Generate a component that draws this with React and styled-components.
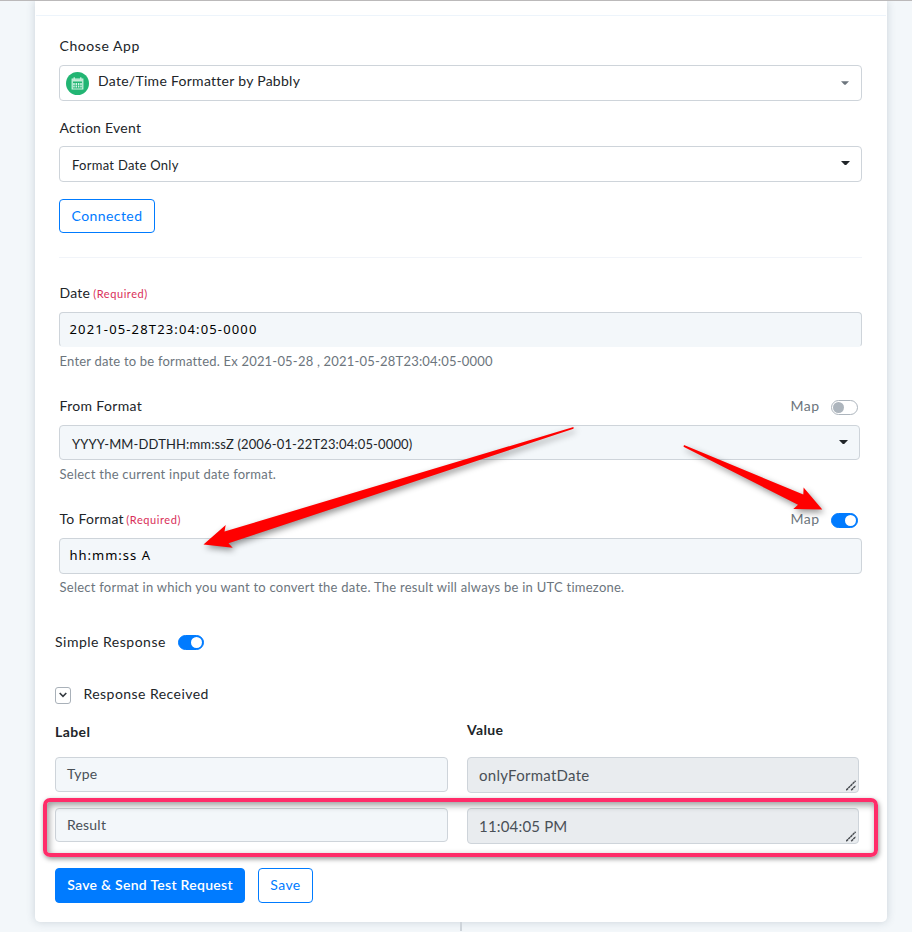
import React from "react";
import styled, { createGlobalStyle } from "styled-components";

const GlobalStyle = createGlobalStyle`
  *, *::before, *::after { box-sizing: border-box; }
  body {
    margin: 0;
    background: #f3f7fa;
    color: #212529;
    font: 14px/20px Lato, sans-serif;
  }
`;

const Page = styled.div`
  position: relative;
  width: 912px;
  height: 932px;
  overflow: hidden;
  border-top: 1px solid #bbb9ba;
`;

const Card = styled.main`
  width: 852px;
  height: 921px;
  margin-left: 35px;
  background: #fff;
  border-radius: 0 0 5px 5px;
  box-shadow: 0 0 9px rgba(60, 80, 100, 0.22);
`;

const CardHeader = styled.div`
  height: 15px;
  margin: 0 1px;
  border-bottom: 1px solid #edf4fb;
`;

const Form = styled.section`
  padding: 0 25px 0 24px;
`;

const Spaced = styled.span`
  letter-spacing: ${(p) => p.$ls}px;
  white-space: pre;
`;

const LiftedText = styled.span`
  padding-bottom: 4px;
`;

const LabelRow = styled.div`
  display: flex;
  align-items: center;
  height: 20px;
  margin-top: ${(p) => p.$top}px;
  padding: 0 4px 0 0.5px;
`;

const Required = styled.small`
  margin-left: ${(p) => p.$gap || 3}px;
  padding-top: 2px;
  font-size: 11px;
  letter-spacing: 0.57px;
  color: #d92f59;
`;

const MapControl = styled.div`
  display: flex;
  align-items: center;
  gap: 11.5px;
  margin-left: auto;
  color: #6c757d;
`;

const Toggle = styled.span`
  display: flex;
  align-items: center;
  justify-content: ${(p) => (p.$on ? "flex-end" : "flex-start")};
  width: ${(p) => p.$w || 27}px;
  height: 15px;
  margin-top: ${(p) => p.$top || 2}px;
  padding: 0 1px;
  border: 1px solid ${(p) => (p.$on ? "#007bff" : "#adb5bd")};
  border-radius: 8px;
  background: ${(p) => (p.$on ? "#007bff" : "#fff")};

  &::before {
    content: "";
    width: 11px;
    height: 11px;
    border-radius: 50%;
    background: ${(p) => (p.$on ? "#fff" : "#adb5bd")};
  }
`;

const SelectBox = styled.div`
  display: flex;
  align-items: center;
  width: ${(p) => p.$w || 803}px;
  height: ${(p) => p.$h || 36}px;
  margin-top: ${(p) => p.$top}px;
  padding: ${(p) => p.$pad};
  border: 1px solid #ced4da;
  border-radius: 4px;
  background: ${(p) => (p.$filled ? "#f3f7fa" : "#fff")};
  font-size: ${(p) => p.$size || 13}px;
`;

const Caret = styled.svg`
  width: ${(p) => p.$w || 9}px;
  height: 4px;
  margin: 0 0 ${(p) => p.$lift || 5}px auto;
  fill: ${(p) => p.$color || "#212529"};
`;

const AppIcon = styled.svg`
  flex: none;
  margin-right: 9px;
`;

const TextField = styled.div`
  display: flex;
  align-items: center;
  width: 803px;
  height: ${(p) => p.$h}px;
  margin-top: 9px;
  padding: 0 10px 2px 9.5px;
  border: 1px solid #ced4da;
  border-bottom-color: ${(p) => (p.$open ? "#f3f7fa" : "#ced4da")};
  border-radius: 4px;
  background: #f3f7fa;
  color: #000;
  font: 13px "Noto Sans", sans-serif;
`;

const Help = styled.p`
  height: 18px;
  margin: ${(p) => p.$top || 5}px 0 0 0.5px;
  font-size: 13px;
  line-height: 18px;
  color: #6c757d;
`;

const Button = styled.button`
  display: inline-flex;
  align-items: center;
  justify-content: center;
  width: ${(p) => p.$w}px;
  height: ${(p) => p.$h}px;
  padding: 0 0 ${(p) => p.$lift || 0}px;
  border: 1px solid #007bff;
  border-radius: 4px;
  background: ${(p) => (p.$primary ? "#007bff" : "#fff")};
  color: ${(p) => (p.$primary ? "#fff" : "#007bff")};
  font: ${(p) => (p.$primary ? 600 : 400)} 14px/20px Lato, sans-serif;
`;

const ConnectionRow = styled.div`
  display: flex;
  margin-top: 17px;
`;

const Rule = styled.hr`
  width: 803px;
  height: 1px;
  margin: 24px 0 0;
  border: 0;
  background: #f1f4f9;
`;

const Response = styled.section`
  padding: 0 28px 0 20px;
`;

const ResponseRow = styled.div`
  display: flex;
  align-items: center;
  height: 20px;
  gap: ${(p) => p.$gap}px;
  margin-top: ${(p) => p.$top}px;
`;

const Expander = styled.span`
  display: grid;
  place-items: center;
  width: 16px;
  height: 17px;
  margin-top: 2px;
  border: 1px solid #a9b1b9;
  border-radius: 3px;
`;

const Columns = styled.div`
  display: grid;
  grid-template-columns: 393px 392px;
  column-gap: 19px;
  margin-top: ${(p) => p.$top}px;
`;

const ColumnTitle = styled.strong`
  height: 20px;
  margin-top: ${(p) => p.$top || 0}px;
  font-weight: 700;
`;

const NameField = styled.div`
  display: flex;
  align-items: center;
  height: ${(p) => p.$h}px;
  padding: 0 11px 1px;
  border: 1px solid #ced4da;
  border-radius: 4px;
  background: #f3f7fa;
  color: #495057;
`;

const ValueField = styled.div`
  display: flex;
  align-items: center;
  justify-content: space-between;
  height: 36px;
  padding: 0 2px 0 11px;
  border: 1px solid #ced4da;
  border-radius: 4px;
  background: #e9ecef;
  color: #495057;
  font-size: 15px;
`;

const ValueText = styled.span`
  padding-bottom: 1px;
`;

const Grip = styled.svg`
  align-self: flex-end;
  margin-bottom: 1px;
`;

const Highlight = styled.div`
  position: absolute;
  left: 42.5px;
  top: 797px;
  width: 835px;
  height: 59px;
  border: 4px solid #ff2c69;
  border-radius: 7px;
  box-shadow: 1px 2px 5px rgba(0, 0, 0, 0.42), inset 2px 3px 7px rgba(0, 0, 0, 0.4);
`;

const Actions = styled.div`
  display: flex;
  gap: 13px;
  margin-top: 24px;
`;

const Connector = styled.div`
  width: 2px;
  height: 9px;
  margin-left: 460px;
  background: #ced4da;
`;

const Arrows = styled.svg`
  position: absolute;
  left: 0;
  top: -1px;
  pointer-events: none;
  filter: drop-shadow(2px 3px 3px rgba(0, 0, 0, 0.42));
`;

const DownCaret = (props) => (
  <Caret viewBox="0 0 9 4" {...props}>
    <path d="M0 0h9L5.2 4H3.8Z" />
  </Caret>
);

const ResizeGrip = () => (
  <Grip width="10" height="11" viewBox="0 0 10 11" fill="none" stroke="#494d52" strokeWidth="1.5">
    <path d="M.2 10.2 9.6.8M5.2 10.2 9.6 5.8" strokeDasharray="2.6 .4" />
  </Grip>
);

function ResultRow({ top, nameHeight, name, nameLs, value, valueLs }) {
  return (
    <Columns $top={top}>
      <NameField $h={nameHeight}><Spaced $ls={nameLs}>{name}</Spaced></NameField>
      <ValueField>
        <ValueText><Spaced $ls={valueLs}>{value}</Spaced></ValueText>
        <ResizeGrip />
      </ValueField>
    </Columns>
  );
}

export default function App() {
  return (
    <Page>
      <GlobalStyle />
      <Card>
        <CardHeader />
        <Form>
          <LabelRow $top={20}><Spaced $ls={0.57}>Choose App</Spaced></LabelRow>
          <SelectBox $top={9} $size={14} $pad="0 12px 0 6px">
            <AppIcon width="23" height="23" viewBox="0 0 23 23">
              <circle cx="11.5" cy="11.5" r="11.5" fill="#22b573" />
              <path d="M6.2 7h10.6v10H6.2zM8.2 5.2v3M14.8 5.2v3" fill="none" stroke="#d5f4e5" strokeWidth="1.2" />
              <path d="M6.2 7.2h10.6v2.3H6.2z" fill="#c4edd8" />
              <path d="M7.2 12h8.6M7.2 14.5h8.6" stroke="#d5f4e5" strokeWidth="1.8" strokeDasharray="1.5 .85" />
            </AppIcon>
            <LiftedText><Spaced $ls={0.28}>Date/Time Formatter by Pabbly</Spaced></LiftedText>
            <DownCaret $w={8} $color="#6c757d" $lift={1} />
          </SelectBox>

          <LabelRow $top={17}><Spaced $ls={0.26}>Action Event</Spaced></LabelRow>
          <SelectBox $top={8} $pad="2px 11px 0 12px">
            <Spaced $ls={0.28}>Format Date Only</Spaced>
            <DownCaret />
          </SelectBox>

          <ConnectionRow>
            <Button $w={96} $h={34}><Spaced $ls={0.42}>Connected</Spaced></Button>
          </ConnectionRow>
          <Rule />

          <LabelRow $top={25}>
            <Spaced $ls={0.25}>Date</Spaced>
            <Required>(Required)</Required>
          </LabelRow>
          <TextField $h={35} $open><Spaced $ls={1.14}>2021-05-28T23:04:05-0000</Spaced></TextField>
          <Help><Spaced $ls={0.2}>Enter date to be formatted. Ex 2021-05-28 , 2021-05-28T23:04:05-0000</Spaced></Help>

          <LabelRow $top={26}>
            <Spaced $ls={0.33}>From Format</Spaced>
            <MapControl><Spaced $ls={0.5}>Map</Spaced><Toggle /></MapControl>
          </LabelRow>
          <SelectBox $top={9} $w={801} $h={35} $filled $pad="2px 11px 0 12px">
            <Spaced $ls={0.14}>YYYY-MM-DDTHH:mm:ssZ (2006-01-22T23:04:05-0000)</Spaced>
            <DownCaret $lift={4} />
          </SelectBox>
          <Help><Spaced $ls={0.25}>Select the current input date format.</Spaced></Help>

          <LabelRow $top={26}>
            <Spaced $ls={0.28}>To Format</Spaced>
            <Required $gap={2.5}>(Required)</Required>
            <MapControl><Spaced $ls={0.5}>Map</Spaced><Toggle $on /></MapControl>
          </LabelRow>
          <TextField $h={36}><Spaced $ls={1}>hh:mm:ss A</Spaced></TextField>
          <Help $top={4}><Spaced $ls={0.25}>Select format in which you want to convert the date. The result will always be in UTC timezone.</Spaced></Help>
        </Form>

        <Response>
          <ResponseRow $top={36} $gap={12}>
            <Spaced $ls={0.5}>Simple Response</Spaced>
            <Toggle $on $w={26} $top={1} />
          </ResponseRow>
          <ResponseRow $top={32} $gap={12.5}>
            <Expander>
              <svg width="8" height="6" viewBox="0 0 8 6" fill="none" stroke="#343a40" strokeWidth="1.6">
                <path d="m.7 1 3.3 3.3L7.3 1" />
              </svg>
            </Expander>
            <Spaced $ls={0.45}>Response Received</Spaced>
          </ResponseRow>
          <Columns $top={16}>
            <ColumnTitle $top={2}><Spaced $ls={0.4}>Label</Spaced></ColumnTitle>
            <ColumnTitle><Spaced $ls={0.35}>Value</Spaced></ColumnTitle>
          </Columns>
          <ResultRow top={15} nameHeight={35} name="Type" nameLs={0.25} value="onlyFormatDate" valueLs={0.27} />
          <ResultRow top={15} nameHeight={34} name="Result" nameLs={0.2} value="11:04:05 PM" valueLs={0.18} />
          <Actions>
            <Button $primary $lift={1} $w={190} $h={35}><Spaced $ls={0.28}>Save &amp; Send Test Request</Spaced></Button>
            <Button $lift={1} $w={55} $h={35}><Spaced $ls={0.4}>Save</Spaced></Button>
          </Actions>
        </Response>
      </Card>
      <Connector />
      <Highlight />
      <Arrows width="912" height="932" viewBox="0 0 912 932" fill="#f00">
        <path d="M573.5 427 224.5 531.5 225.7 525 203.5 544.5 232.7 547.8 228.5 543.3 573.5 428.8Z" />
        <path d="M684 445 803.3 494.5 803.6 487.5 822.3 509.5 793.3 509 798 504.7 683.5 446.8Z" />
      </Arrows>
    </Page>
  );
}
